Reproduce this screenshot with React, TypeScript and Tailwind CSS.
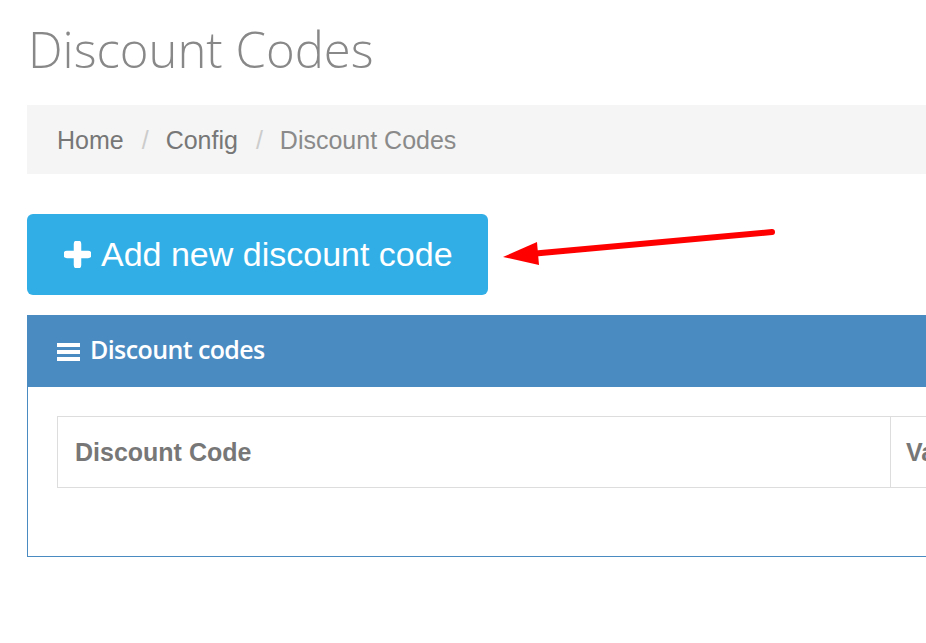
import React from "react";

export default function App() {
  return (
    <div className="relative w-[926px] h-[643px] overflow-hidden bg-white">
      <div className="w-[1300px] pl-[27px]">
        <div className="h-[105px] pt-[13px] pl-[1px]">
          <h1
            className="text-[49px] leading-[72px] font-light text-[#888888]"
            style={{ fontFamily: '"Open Sans", sans-serif' }}
          >
            Discount Codes
          </h1>
        </div>
        <div
          className="h-[69px] bg-[#f5f5f5] flex items-center pl-[30px] pt-[2px] text-[25px]"
          style={{ fontFamily: '"Liberation Sans", Arial, sans-serif' }}
        >
          <span className="text-[#777777]">Home</span>
          <span className="text-[#cccccc] pl-[18px] pr-[17px]">/</span>
          <span className="text-[#777777]">Config</span>
          <span className="text-[#cccccc] pl-[18px] pr-[17px]">/</span>
          <span className="text-[#8a8a8a]">Discount Codes</span>
        </div>
        <div className="mt-[40px]">
          <button
            className="h-[81px] w-[461px] rounded-[6px] bg-[#31aee6] flex items-center pl-[37px] text-white text-[34px]"
            style={{ fontFamily: '"Liberation Sans", Arial, sans-serif' }}
          >
            <svg width="27" height="27" viewBox="0 0 27 27" className="mr-[10px]">
              <path d="M13.5 3 V24 M3 13.5 H24" stroke="white" strokeWidth="7.5" strokeLinecap="round" />
            </svg>
            Add new discount code
          </button>
        </div>
        <div className="mt-[20px] border border-[#4a8bc2]">
          <div className="h-[71px] bg-[#4a8bc2] flex items-center pl-[29px] text-white">
            <svg width="23" height="20" viewBox="0 0 23 20" className="mr-[10px]">
              <rect x="0" y="1" width="23" height="4" fill="white" />
              <rect x="0" y="8" width="23" height="4" fill="white" />
              <rect x="0" y="15" width="23" height="4" fill="white" />
            </svg>
            <span
              className="text-[25px] font-semibold tracking-[-0.6px] pb-[3px]"
              style={{ fontFamily: '"Open Sans", sans-serif' }}
            >
              Discount codes
            </span>
          </div>
          <div className="pt-[29px] pb-[68px] pl-[29px]">
            <table
              className="border-collapse"
              style={{ fontFamily: '"Liberation Sans", Arial, sans-serif' }}
            >
              <thead>
                <tr className="h-[71px]">
                  <th className="w-[833px] border border-[#dddddd] text-left pl-[17px] pt-[2px] text-[25px] font-bold text-[#777777]">
                    Discount Code
                  </th>
                  <th className="w-[300px] border border-[#dddddd] text-left pl-[15px] pt-[2px] text-[25px] font-bold text-[#777777]">
                    Value
                  </th>
                </tr>
              </thead>
            </table>
          </div>
        </div>
      </div>
      <svg
        className="absolute left-0 top-0 pointer-events-none"
        width="926"
        height="643"
        viewBox="0 0 926 643"
      >
        <line x1="772" y1="232" x2="530" y2="254" stroke="#ff0000" strokeWidth="6" strokeLinecap="round" />
        <polygon points="503,257 537,242 539,265" fill="#ff0000" />
      </svg>
    </div>
  );
}
